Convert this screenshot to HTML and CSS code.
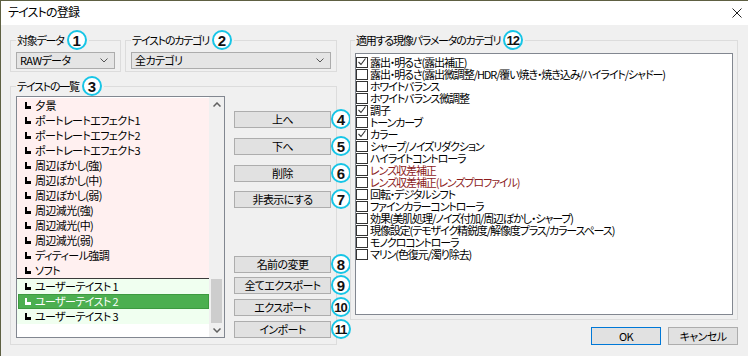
FILE: index.html
```html
<!DOCTYPE html>
<html>
<head>
    <title>テイストの登録</title>
    <link rel="stylesheet" href="styles.css">
</head>
<body>
    <div class="window">
        <div class="titlebar">
            <span class="title">テイストの登録</span>
            <svg class="close" width="10" height="10" viewBox="0 0 10 10"><path d="M0.5 0.5 L9.5 9.5 M9.5 0.5 L0.5 9.5" stroke="#222" stroke-width="1"/></svg>
        </div>

        <div class="content">
            <div class="left">
                <div class="top-row">
                    <fieldset class="group group-data">
                        <legend>対象データ<span class="num">1</span></legend>
                        <div class="select">RAWデータ<svg class="chev" width="8" height="5" viewBox="0 0 8 5"><path d="M0.5 0.5 L4 4 L7.5 0.5" fill="none" stroke="#555"/></svg></div>
                    </fieldset>
                    <fieldset class="group group-cat">
                        <legend>テイストのカテゴリ<span class="num">2</span></legend>
                        <div class="select">全カテゴリ<svg class="chev" width="8" height="5" viewBox="0 0 8 5"><path d="M0.5 0.5 L4 4 L7.5 0.5" fill="none" stroke="#555"/></svg></div>
                    </fieldset>
                </div>

                <fieldset class="group group-list">
                    <legend>テイストの一覧<span class="num">3</span></legend>
                    <div class="list-row">
                        <div class="listbox">
                            <ul class="items">
                                <li class="preset"><svg class="mark" width="6" height="7" viewBox="0 0 6 7"><path d="M0 0 H2 V4 H6 V7 H0 Z"/></svg>夕景</li>
                                <li class="preset"><svg class="mark" width="6" height="7" viewBox="0 0 6 7"><path d="M0 0 H2 V4 H6 V7 H0 Z"/></svg>ポートレートエフェクト1</li>
                                <li class="preset"><svg class="mark" width="6" height="7" viewBox="0 0 6 7"><path d="M0 0 H2 V4 H6 V7 H0 Z"/></svg>ポートレートエフェクト2</li>
                                <li class="preset"><svg class="mark" width="6" height="7" viewBox="0 0 6 7"><path d="M0 0 H2 V4 H6 V7 H0 Z"/></svg>ポートレートエフェクト3</li>
                                <li class="preset"><svg class="mark" width="6" height="7" viewBox="0 0 6 7"><path d="M0 0 H2 V4 H6 V7 H0 Z"/></svg>周辺ぼかし(強)</li>
                                <li class="preset"><svg class="mark" width="6" height="7" viewBox="0 0 6 7"><path d="M0 0 H2 V4 H6 V7 H0 Z"/></svg>周辺ぼかし(中)</li>
                                <li class="preset"><svg class="mark" width="6" height="7" viewBox="0 0 6 7"><path d="M0 0 H2 V4 H6 V7 H0 Z"/></svg>周辺ぼかし(弱)</li>
                                <li class="preset"><svg class="mark" width="6" height="7" viewBox="0 0 6 7"><path d="M0 0 H2 V4 H6 V7 H0 Z"/></svg>周辺減光(強)</li>
                                <li class="preset"><svg class="mark" width="6" height="7" viewBox="0 0 6 7"><path d="M0 0 H2 V4 H6 V7 H0 Z"/></svg>周辺減光(中)</li>
                                <li class="preset"><svg class="mark" width="6" height="7" viewBox="0 0 6 7"><path d="M0 0 H2 V4 H6 V7 H0 Z"/></svg>周辺減光(弱)</li>
                                <li class="preset"><svg class="mark" width="6" height="7" viewBox="0 0 6 7"><path d="M0 0 H2 V4 H6 V7 H0 Z"/></svg>ディティール強調</li>
                                <li class="preset last"><svg class="mark" width="6" height="7" viewBox="0 0 6 7"><path d="M0 0 H2 V4 H6 V7 H0 Z"/></svg>ソフト</li>
                                <li class="user"><svg class="mark" width="6" height="7" viewBox="0 0 6 7"><path d="M0 0 H2 V4 H6 V7 H0 Z"/></svg>ユーザーテイスト 1</li>
                                <li class="user selected"><svg class="mark" width="6" height="7" viewBox="0 0 6 7"><path d="M0 0 H2 V4 H6 V7 H0 Z"/></svg>ユーザーテイスト 2</li>
                                <li class="user"><svg class="mark" width="6" height="7" viewBox="0 0 6 7"><path d="M0 0 H2 V4 H6 V7 H0 Z"/></svg>ユーザーテイスト 3</li>
                            </ul>
                            <div class="scrollbar">
                                <div class="arrow arrow-up"><svg width="8" height="5" viewBox="0 0 8 5"><path d="M0.5 4.5 L4 1 L7.5 4.5" fill="none" stroke="#606060" stroke-width="1.5"/></svg></div>
                                <div class="thumb"></div>
                                <div class="arrow arrow-down"><svg width="8" height="5" viewBox="0 0 8 5"><path d="M0.5 0.5 L4 4 L7.5 0.5" fill="none" stroke="#606060" stroke-width="1.5"/></svg></div>
                            </div>
                        </div>

                        <div class="actions">
                            <div class="action a-up"><button class="btn">上へ</button><span class="num">4</span></div>
                            <div class="action a-down"><button class="btn">下へ</button><span class="num">5</span></div>
                            <div class="action a-del"><button class="btn">削除</button><span class="num">6</span></div>
                            <div class="action a-hide"><button class="btn">非表示にする</button><span class="num">7</span></div>
                            <div class="action a-rename"><button class="btn">名前の変更</button><span class="num">8</span></div>
                            <div class="action a-expall"><button class="btn">全てエクスポート</button><span class="num">9</span></div>
                            <div class="action a-exp"><button class="btn">エクスポート</button><span class="num two">10</span></div>
                            <div class="action a-imp"><button class="btn">インポート</button><span class="num two">11</span></div>
                        </div>
                    </div>
                </fieldset>
            </div>

            <div class="right">
                <fieldset class="group group-params">
                    <legend>適用する現像パラメータのカテゴリ<span class="num two">12</span></legend>
                    <div class="checklist">
                        <div class="check"><span class="box"><svg width="10" height="10" viewBox="0 0 10 10"><path d="M1.5 5 L4 7.5 L8.5 1.5" fill="none" stroke="#333" stroke-width="1.1"/></svg></span>露出・明るさ(露出補正)</div>
                        <div class="check"><span class="box"></span>露出・明るさ(露出微調整/HDR/覆い焼き・焼き込み/ハイライト/シャドー)</div>
                        <div class="check"><span class="box"></span>ホワイトバランス</div>
                        <div class="check"><span class="box"></span>ホワイトバランス微調整</div>
                        <div class="check"><span class="box"><svg width="10" height="10" viewBox="0 0 10 10"><path d="M1.5 5 L4 7.5 L8.5 1.5" fill="none" stroke="#333" stroke-width="1.1"/></svg></span>調子</div>
                        <div class="check"><span class="box"></span>トーンカーブ</div>
                        <div class="check"><span class="box"><svg width="10" height="10" viewBox="0 0 10 10"><path d="M1.5 5 L4 7.5 L8.5 1.5" fill="none" stroke="#333" stroke-width="1.1"/></svg></span>カラー</div>
                        <div class="check"><span class="box"></span>シャープ/ノイズリダクション</div>
                        <div class="check"><span class="box"></span>ハイライトコントローラ</div>
                        <div class="check lens"><span class="box"></span>レンズ収差補正</div>
                        <div class="check lens"><span class="box"></span>レンズ収差補正(レンズプロファイル)</div>
                        <div class="check"><span class="box"></span>回転・デジタルシフト</div>
                        <div class="check"><span class="box"></span>ファインカラーコントローラ</div>
                        <div class="check"><span class="box"></span>効果(美肌処理/ノイズ付加/周辺ぼかし・シャープ)</div>
                        <div class="check"><span class="box"></span>現像設定(テモザイク精鋭度/解像度プラス/カラースペース)</div>
                        <div class="check"><span class="box"></span>モノクロコントローラ</div>
                        <div class="check"><span class="box"></span>マリン(色復元/濁り除去)</div>
                    </div>
                </fieldset>
                <div class="dialog-buttons">
                    <button class="btn btn-dialog default">OK</button>
                    <button class="btn btn-dialog">キャンセル</button>
                </div>
            </div>
        </div>
    </div>
</body>
</html>
```

FILE: styles.css
```css
body {
    margin: 0;
    font-family: "Noto Sans CJK JP", "Noto Sans", sans-serif;
    font-size: 11px;
    letter-spacing: -0.6px;
    font-feature-settings: "palt";
    color: #000;
    background: #f0f0f0;
}
.window {
    box-sizing: border-box;
    width: 748px;
    height: 356px;
    border-top: 1px solid #5e6042;
    border-left: 1px solid #5e6042;
    background: #f0f0f0;
    overflow: hidden;
}
.titlebar {
    height: 24px;
    background: #fff;
    display: flex;
    align-items: center;
    justify-content: space-between;
    padding: 0 6px 0 7px;
}
.title {
    font-size: 12px;
    letter-spacing: -0.8px;
    line-height: 1;
    margin-top: -2px;
}
.close {
    display: block;
}
.content {
    display: flex;
    gap: 13px;
    padding: 5px 0 0 9px;
}
.left {
    width: 327px;
    flex: none;
}
.top-row {
    display: flex;
    gap: 4px;
}

/* group boxes */
.group {
    margin: 0;
    border: 1px solid #dcdcdc;
    padding: 2px 5px 2px 5px;
    min-width: 0;
}
.group legend {
    display: flex;
    align-items: center;
    height: 20px;
    padding: 0 2px 0 1px;
    line-height: 1;
    letter-spacing: -1.2px;
}
.num {
    flex: none;
    box-sizing: border-box;
    width: 20px;
    height: 20px;
    border: 2px solid #17c5e6;
    border-radius: 50%;
    background: #fff;
    display: flex;
    align-items: center;
    justify-content: center;
    font-family: "Liberation Sans", Arial, sans-serif;
    font-weight: bold;
    font-size: 15px;
    letter-spacing: 0;
    color: #111;
}
.num.two {
    font-size: 13px;
    letter-spacing: -1px;
    padding-right: 1px;
}
.group legend .num {
    margin-left: 3px;
}
.group-data {
    width: 111px;
    box-sizing: border-box;
}
.group-cat {
    flex: 1;
}
.select {
    box-sizing: border-box;
    height: 17px;
    border: 1px solid #acacac;
    background: #e5e5e5;
    display: flex;
    align-items: center;
    justify-content: space-between;
    padding: 0 6px 0 3px;
    line-height: 1;
}
.chev {
    display: block;
}

/* taste list */
.group-list {
    margin-top: 4px;
    padding: 0 5px 5px 5px;
}
.list-row {
    display: flex;
}
.listbox {
    flex: none;
    box-sizing: border-box;
    width: 209px;
    height: 242px;
    border: 1px solid #828790;
    background: #fff;
    display: flex;
}
.items {
    list-style: none;
    margin: 0;
    padding: 1px 0 0 0;
    flex: 1;
}
.items li {
    height: 15px;
    display: flex;
    align-items: center;
    line-height: 1;
    white-space: nowrap;
}
.mark {
    display: block;
    flex: none;
    margin: 0 4px 0 8px;
    fill: #000;
}
.preset {
    background: #fff0f0;
}
.preset.last {
    border-bottom: 1px solid #3a3a3a;
}
.user {
    background: #f0fff0;
}
.user.selected {
    background: #4caf50;
    color: #fff;
    box-shadow: inset 0 0 0 1px #3d9a40;
    margin-left: 1px;
}
.user.selected .mark {
    fill: #fff;
    margin-left: 7px;
}
.scrollbar {
    flex: none;
    width: 15px;
    background: #f0f0f0;
    display: flex;
    flex-direction: column;
    align-items: center;
}
.arrow {
    display: flex;
    justify-content: center;
}
.arrow-up {
    height: 15px;
    align-items: center;
}
.arrow-down {
    height: 14px;
    align-items: center;
}
.thumb {
    margin-top: auto;
    width: 11px;
    height: 44px;
    background: #cdcdcd;
}

/* side buttons */
.actions {
    flex: none;
    margin-left: 9px;
    display: flex;
    flex-direction: column;
}
.action {
    display: flex;
    align-items: center;
}
.btn {
    flex: none;
    box-sizing: border-box;
    width: 97px;
    height: 17px;
    border: 1px solid #adadad;
    background: #e1e1e1;
    font-family: inherit;
    font-size: 11px;
    letter-spacing: -0.6px;
    font-feature-settings: "palt";
    line-height: 1;
    padding: 0;
    color: #000;
}
.a-up { margin-top: 13px; }
.a-down { margin-top: 7px; }
.a-del { margin-top: 7px; }
.a-hide { margin-top: 6px; }
.a-rename { margin-top: 45px; }
.a-expall { margin-top: 1px; }
.a-exp { margin-top: 2px; }
.a-imp { margin-top: 2px; }

/* parameter categories */
.right {
    width: 388px;
    flex: none;
}
.group-params {
    padding: 3px 4px 4px 4px;
}
.checklist {
    box-sizing: border-box;
    height: 262px;
    border: 1px solid #828790;
    background: #fff;
    padding-top: 2px;
    letter-spacing: -1.1px;
}
.check {
    height: 12px;
    display: flex;
    align-items: center;
    line-height: 1;
    white-space: nowrap;
}
.box {
    flex: none;
    box-sizing: border-box;
    width: 12px;
    height: 11px;
    border: 1px solid #333;
    background: #fff;
    margin-right: 2px;
    display: flex;
    align-items: center;
    justify-content: center;
}
.box svg {
    display: block;
}
.lens {
    color: #8c1c1c;
}
.dialog-buttons {
    margin-top: 7px;
    display: flex;
    justify-content: flex-end;
    gap: 7px;
}
.btn-dialog {
    width: 70px;
    height: 18px;
}
.btn-dialog.default {
    border-color: #0078d7;
}
```
